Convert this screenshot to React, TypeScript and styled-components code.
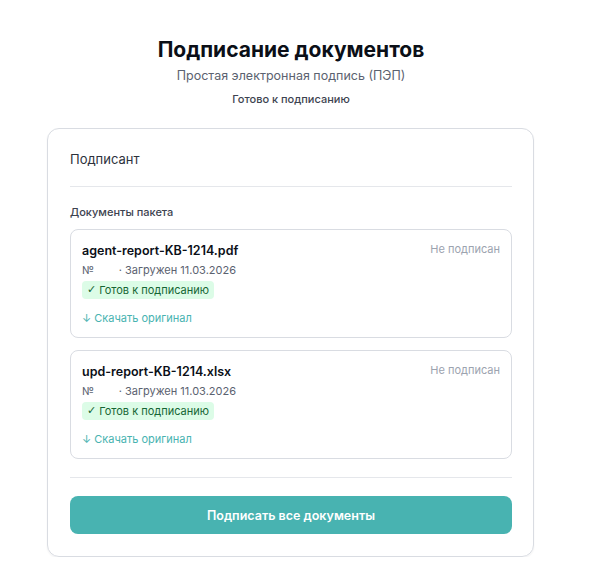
import React from "react";
import styled, { createGlobalStyle } from "styled-components";

const Global = createGlobalStyle`
  html, body { margin: 0; padding: 0; background: #ffffff; }
  body { font-family: Inter, "Noto Sans", sans-serif; color: #111827; }
  * { box-sizing: border-box; }
`;

const Page = styled.div`
  padding: 38px 0 0 47px;
  width: 594px;
`;

const Header = styled.header`
  width: 488px;
  display: flex;
  flex-direction: column;
  align-items: center;
  margin-bottom: 22px;
`;

const Title = styled.h1`
  margin: 0;
  font-size: 21px;
  line-height: 24px;
  font-weight: 700;
  color: #0b0f17;
`;

const Subtitle = styled.div`
  margin-top: 6px;
  font-size: 12.5px;
  line-height: 16px;
  color: #5b6270;
`;

const Status = styled.div`
  margin-top: 8px;
  font-size: 11px;
  line-height: 14px;
  font-weight: 500;
  color: #3d4350;
`;

const Card = styled.section`
  width: 487px;
  border: 1px solid #d9dce2;
  border-radius: 12px;
  box-shadow: 0 1px 2px rgba(16, 24, 40, 0.06);
  padding: 22px 21px 22px 22px;
  display: flex;
  flex-direction: column;
`;

const SectionTitle = styled.div`
  font-size: 13px;
  line-height: 16px;
  color: #2d323c;
  padding-bottom: 19px;
  border-bottom: 1px solid #e5e7eb;
`;

const DocsLabel = styled.div`
  margin-top: 18px;
  font-size: 11px;
  line-height: 14px;
  font-weight: 500;
  color: #3d4350;
`;

const DocList = styled.div`
  margin-top: 10px;
  display: flex;
  flex-direction: column;
  gap: 12px;
  padding-bottom: 18px;
  border-bottom: 1px solid #e5e7eb;
`;

const Doc = styled.div`
  border: 1px solid #d9dce2;
  border-radius: 8px;
  padding: 12px 11px 12px 11px;
  display: flex;
  justify-content: space-between;
  align-items: flex-start;
  height: 109px;
`;

const DocBody = styled.div`
  display: flex;
  flex-direction: column;
  align-items: flex-start;
`;

const DocName = styled.div`
  font-size: 12.5px;
  line-height: 17px;
  font-weight: 600;
  color: #0b0f17;
`;

const Meta = styled.div`
  margin-top: 4px;
  font-size: 11px;
  line-height: 14px;
  color: #5b6270;
  white-space: pre;
`;

const Badge = styled.div`
  margin-top: 4px;
  height: 18px;
  display: flex;
  align-items: center;
  gap: 3px;
  background: #dcfce7;
  color: #166534;
  font-size: 11px;
  line-height: 14px;
  padding: 0 5px;
  border-radius: 4px;
`;

const Check = styled.span`
  font-family: "DejaVu Sans", sans-serif;
  font-size: 11px;
  line-height: 14px;
`;

const Download = styled.a`
  margin-top: 12px;
  font-size: 11px;
  line-height: 14px;
  color: #48b3b1;
  text-decoration: none;
`;

const DocState = styled.div`
  font-size: 11px;
  line-height: 14px;
  color: #9ca3af;
`;

const SignButton = styled.button`
  margin-top: 18px;
  height: 38px;
  border: none;
  border-radius: 8px;
  background: #48b3b1;
  color: #ffffff;
  font-family: inherit;
  font-size: 12.5px;
  font-weight: 600;
  cursor: pointer;
`;

const docs = ["agent-report-KB-1214.pdf", "upd-report-KB-1214.xlsx"];

export default function App() {
  return (
    <>
      <Global />
      <Page>
        <Header>
          <Title>Подписание документов</Title>
          <Subtitle>Простая электронная подпись (ПЭП)</Subtitle>
          <Status>Готово к подписанию</Status>
        </Header>
        <Card>
          <SectionTitle>Подписант</SectionTitle>
          <DocsLabel>Документы пакета</DocsLabel>
          <DocList>
            {docs.map((d) => (
              <Doc key={d}>
                <DocBody>
                  <DocName>{d}</DocName>
                  <Meta>{"№        · Загружен 11.03.2026"}</Meta>
                  <Badge>
                    <Check>✓</Check>
                    <span>Готов к подписанию</span>
                  </Badge>
                  <Download href="#">↓ Скачать оригинал</Download>
                </DocBody>
                <DocState>Не подписан</DocState>
              </Doc>
            ))}
          </DocList>
          <SignButton>Подписать все документы</SignButton>
        </Card>
      </Page>
    </>
  );
}
